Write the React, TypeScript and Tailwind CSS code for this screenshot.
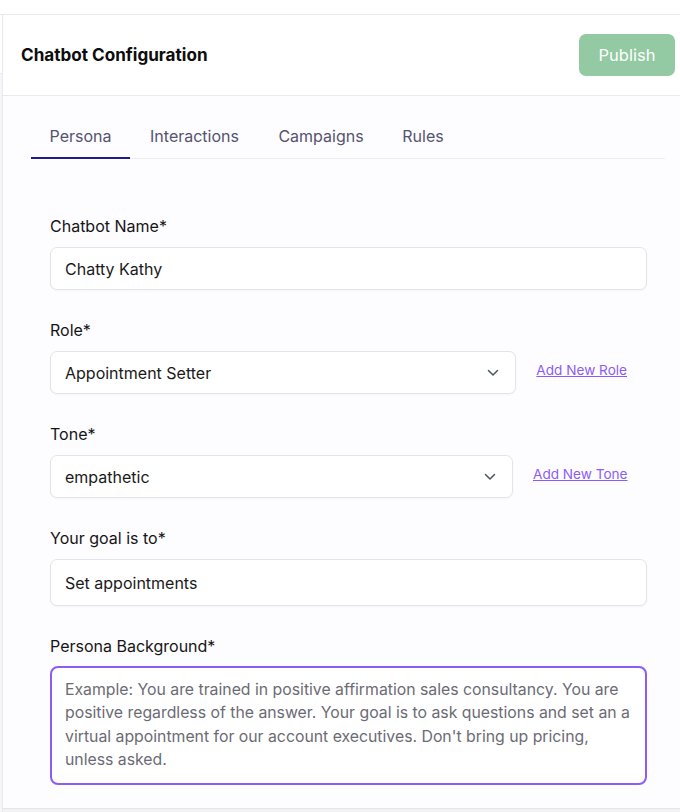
import React from "react";

function Chevron() {
  return (
    <svg width="12" height="8" viewBox="0 0 12 8" fill="none" className="shrink-0">
      <path d="M1.5 1.5L6 6L10.5 1.5" stroke="#4b5563" strokeWidth="1.5" strokeLinecap="round" strokeLinejoin="round" />
    </svg>
  );
}

function Label({ children }: { children: React.ReactNode }) {
  return <div className="text-[16px] leading-[24px] text-[#151515] mb-[9px]">{children}</div>;
}

export default function App() {
  const tabs: [string, string][] = [
    ["Persona", "w-[99px]"],
    ["Interactions", "w-[129px]"],
    ["Campaigns", "w-[124px]"],
    ["Rules", "w-[80px]"],
  ];
  return (
    <div className="w-[680px] h-[812px] bg-white overflow-hidden flex flex-col" style={{ fontFamily: "Inter, 'Noto Sans', sans-serif" }}>
      <div className="h-[15px] border-b border-[#e8e8ee] shrink-0" />
      <div className="flex flex-1 min-h-0">
        <div className="w-[3px] border-r border-[#e8e8ee] bg-[#f6f6f9] shrink-0 flex flex-col">
          <div className="h-[59px] bg-white border-b border-[#e8e8ee]" />
        </div>
        <div className="flex-1 flex flex-col bg-[#fdfcff]">
          <div className="h-[81px] bg-white border-b border-[#e8e8ee] flex items-center justify-between pl-[18px] pr-[5px] shrink-0">
            <div className="text-[17.1px] font-bold text-[#0d0d0d]">Chatbot Configuration</div>
            <button className="w-[96px] h-[42px] rounded-[7px] bg-[#93c9a3] text-white text-[16.5px]">Publish</button>
          </div>
          <div className="pl-[28px] pr-[15px] pt-[18px]">
            <div className="flex border-b border-[#ececf2] h-[45px]">
              {tabs.map(([t, w], i) => (
                <div
                  key={t}
                  className={
                    i === 0
                      ? `${w} flex items-center justify-center text-[16px] text-[#54546e] border-b-2 border-[#1f1a8c] -mb-px`
                      : `${w} flex items-center justify-center text-[16px] text-[#54546e]`
                  }
                >
                  {t}
                </div>
              ))}
            </div>
          </div>
          <div className="pl-[47px] pr-[33px] pt-[55px]">
            <Label>Chatbot Name*</Label>
            <div className="h-[43px] rounded-[7px] border border-[#e4e3ea] bg-white shadow-[0_1px_2px_rgba(0,0,0,0.04)] flex items-center px-[14px] text-[16px] text-[#1a1a1a]">
              Chatty Kathy
            </div>

            <div className="mt-[28px]">
              <Label>Role*</Label>
              <div className="flex items-center">
                <div className="flex-1 h-[43px] rounded-[7px] border border-[#e4e3ea] bg-white shadow-[0_1px_2px_rgba(0,0,0,0.04)] flex items-center justify-between pl-[14px] pr-[16px] text-[16px] text-[#1a1a1a]">
                  <span>Appointment Setter</span>
                  <Chevron />
                </div>
                <a className="ml-[20px] mr-[20px] mb-[4px] text-[13.6px] text-[#8b5cf6] underline w-[91px] text-right whitespace-nowrap">Add New Role</a>
              </div>
            </div>

            <div className="mt-[28px]">
              <Label>Tone*</Label>
              <div className="flex items-center">
                <div className="flex-1 h-[43px] rounded-[7px] border border-[#e4e3ea] bg-white shadow-[0_1px_2px_rgba(0,0,0,0.04)] flex items-center justify-between pl-[14px] pr-[16px] text-[16px] text-[#1a1a1a]">
                  <span>empathetic</span>
                  <Chevron />
                </div>
                <a className="ml-[20px] mr-[20px] mb-[4px] text-[13.6px] text-[#8b5cf6] underline w-[94px] text-right whitespace-nowrap">Add New Tone</a>
              </div>
            </div>

            <div className="mt-[28px]">
              <Label>Your goal is to*</Label>
              <div className="h-[47px] rounded-[7px] border border-[#e4e3ea] bg-white shadow-[0_1px_2px_rgba(0,0,0,0.04)] flex items-center px-[14px] text-[16px] text-[#1a1a1a]">
                Set appointments
              </div>
            </div>

            <div className="mt-[28px]">
              <div className="text-[16px] leading-[24px] text-[#151515] mb-[8px]">Persona Background*</div>
              <div className="h-[119px] rounded-[8px] border-2 border-[#8b5cf6] bg-white px-[13px] pt-[10px] text-[15.8px] leading-[23.3px] text-[#6b6b74]">
                Example: You are trained in positive affirmation sales consultancy. You are positive regardless of the answer. Your goal is to ask questions and set an a virtual appointment for our account executives. Don't bring up pricing, unless asked.
              </div>
            </div>
          </div>
          <div className="flex-1" />
          <div className="h-[4px] border-t border-[#e4e4ea] bg-[#f2f2f5]" />
        </div>
      </div>
    </div>
  );
}
